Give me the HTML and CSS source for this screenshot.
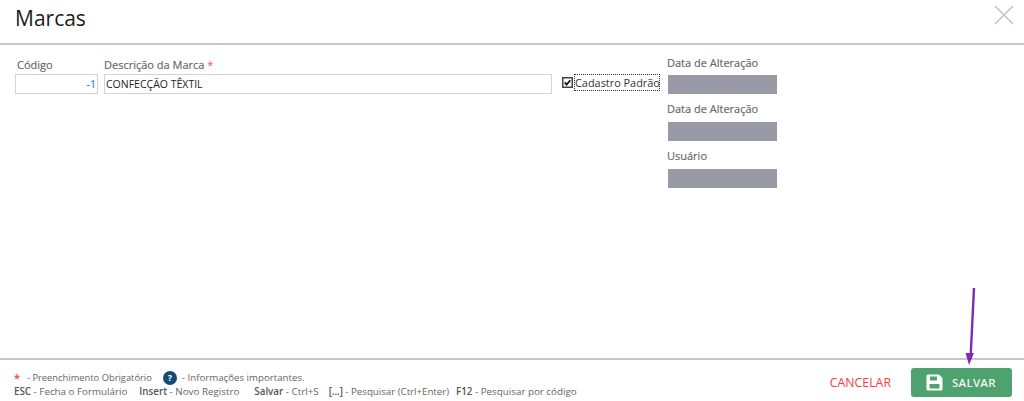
FILE: index.html
```html
<!DOCTYPE html>
<html lang="pt">
<head>
<meta charset="utf-8">
<title>Marcas</title>
<link rel="stylesheet" href="styles.css">
</head>
<body>
<div class="modal">
  <header class="head">
    <h1 class="title">Marcas</h1>
    <svg class="close" width="20" height="20" viewBox="0 0 20 20"><path d="M1 1L19 19M19 1L1 19" stroke="#c4c4c4" stroke-width="1.6" fill="none"/></svg>
  </header>
  <main class="body">
    <div class="field code-field">
      <label class="lbl code-lbl">Código</label>
      <div class="input code">-1</div>
    </div>
    <div class="field desc-field">
      <label class="lbl">Descrição da Marca <span class="req">*</span></label>
      <div class="input desc">CONFECÇÃO TÊXTIL</div>
    </div>
    <div class="check">
      <svg class="box" width="11" height="11" viewBox="0 0 11 11"><rect x="0.75" y="0.75" width="9.5" height="9.5" fill="#fff" stroke="#444" stroke-width="1.5"/><path d="M2.7 5.4L4.6 7.6L8.3 3.2" stroke="#111" stroke-width="1.7" fill="none"/></svg>
      <span class="check-lbl">Cadastro Padrão</span>
    </div>
    <div class="side">
      <label class="lbl side-lbl">Data de Alteração</label>
      <div class="ro"></div>
      <label class="lbl side-lbl second">Data de Alteração</label>
      <div class="ro"></div>
      <label class="lbl side-lbl third">Usuário</label>
      <div class="ro"></div>
    </div>
  </main>
  <footer class="foot">
    <div class="help">
      <div class="help-row first">
        <span class="req star">*</span><span class="oblig">- Preenchimento Obrigatório</span>
        <span class="q">?</span><span class="info">- Informações importantes.</span>
      </div>
      <div class="help-row keys">
        <span class="k1"><b>ESC</b> - Fecha o Formulário</span>
        <span class="k2"><b>Insert</b> - Novo Registro</span>
        <span class="k3"><b>Salvar</b> - Ctrl+S</span>
        <span class="k4"><b>[...]</b> - Pesquisar (Ctrl+Enter)</span>
        <span><b>F12</b> - Pesquisar por código</span>
      </div>
    </div>
    <div class="actions">
      <span class="cancel">CANCELAR</span>
      <span class="save">
        <svg width="17" height="17" viewBox="0 0 17 17"><path fill-rule="evenodd" fill="#fff" d="M2 0.5H13L16.5 4V15A1.5 1.5 0 0 1 15 16.5H2A1.5 1.5 0 0 1 0.5 15V2A1.5 1.5 0 0 1 2 0.5ZM4 2.5V6.5H11V2.5ZM3.5 10V14.5H13.5V10Z"/></svg>
        SALVAR
      </span>
    </div>
  </footer>
  <svg class="arrow" width="20" height="84" viewBox="0 0 20 84"><path d="M12 1L8.5 72" stroke="#7b2cb0" stroke-width="2.4" fill="none"/><path d="M3.5 66H12L7 78Z" fill="#7b2cb0"/></svg>
</div>
</body>
</html>
```
FILE: styles.css
```css
* { box-sizing: border-box; }
html, body { margin: 0; height: 100%; }
body { background: #fff; font-family: "Open Sans", "Noto Sans", sans-serif; color: #222; overflow: hidden; }
.modal { position: relative; width: 1024px; height: 401px; display: flex; flex-direction: column; }
.head { height: 45px; flex: none; border-bottom: 2px solid #c8c8c8; display: flex; justify-content: space-between; padding: 5px 10px 0 15px; }
.title { margin: 0; font-size: 21px; line-height: 27px; font-weight: 400; color: #1c1c1c; }
.body { flex: 1; display: flex; align-items: flex-start; padding: 12px 0 0 15px; }
.field { display: flex; flex-direction: column; }
.lbl { font-size: 11px; line-height: 15px; color: #666; font-weight: 400; display: block; white-space: nowrap; -webkit-text-stroke: 0.15px #666; }
.code-lbl { padding-left: 2px; }
.req { color: #ee5a45; -webkit-text-stroke: 0; }
.input { height: 20px; margin-top: 2px; border: 1px solid #d4d4d4; font-size: 10.5px; line-height: 18px; padding: 0 1px; color: #222; }
.code { width: 83px; text-align: right; color: #2f8ae0; -webkit-text-stroke: 0.2px #2f8ae0; }
.desc-field { margin-left: 6px; }
.desc { width: 448px; }
.check { display: flex; align-items: center; margin: 18px 0 0 10px; }
.box { flex: none; }
.check-lbl { margin-left: 2px; font-size: 10.9px; line-height: 15px; outline: 1px dotted #333; width: 84px; white-space: nowrap; color: #333; }
.side { margin: -2px 0 0 8px; display: flex; flex-direction: column; }
.side-lbl { line-height: 15px; }
.ro { width: 109px; height: 19px; margin: 5px 0 0 1px; background: #9a99a6; }
.second { margin-top: 7px; }
.third { margin-top: 7px; }
.second + .ro { margin-top: 6px; }
.third + .ro { margin-top: 6px; }
.foot { height: 43px; flex: none; border-top: 2px solid #c8c8c8; display: flex; justify-content: space-between; padding: 0 12px 0 14px; }
.help { font-size: 9.8px; line-height: 14px; color: #666; padding-top: 10px; }
.help-row { display: flex; align-items: center; white-space: nowrap; height: 15px; }
.keys { margin-top: -1px; }
.oblig { font-size: 9.35px; }
.info { font-size: 9.7px; }
.help b { font-weight: 600; color: #555; }
.star { font-size: 11px; margin-right: 7px; font-weight: 700; }
.q { width: 14px; height: 14px; border-radius: 50%; background: #154a73; color: #fff; font-size: 9px; font-weight: 700; line-height: 14px; text-align: center; margin: 0 5px 0 11px; }
.keys .k1 { margin-right: 12px; }
.keys .k2 { margin-right: 15px; }
.keys .k3 { margin-right: 10px; }
.keys .k4 { margin-right: 7px; letter-spacing: -0.05px; }
.actions { display: flex; align-items: flex-start; padding-top: 8px; }
.cancel { font-size: 12.3px; line-height: 29px; color: #fb3a3a; margin-right: 20px; }
.save { width: 101px; height: 29px; background: #4ea26e; border-radius: 3px; color: #f2f2f2; font-size: 11.5px; font-weight: 600; letter-spacing: 0.25px; display: flex; align-items: center; gap: 9px; padding-left: 15px; }
.arrow { position: absolute; left: 962px; top: 287px; }
```
